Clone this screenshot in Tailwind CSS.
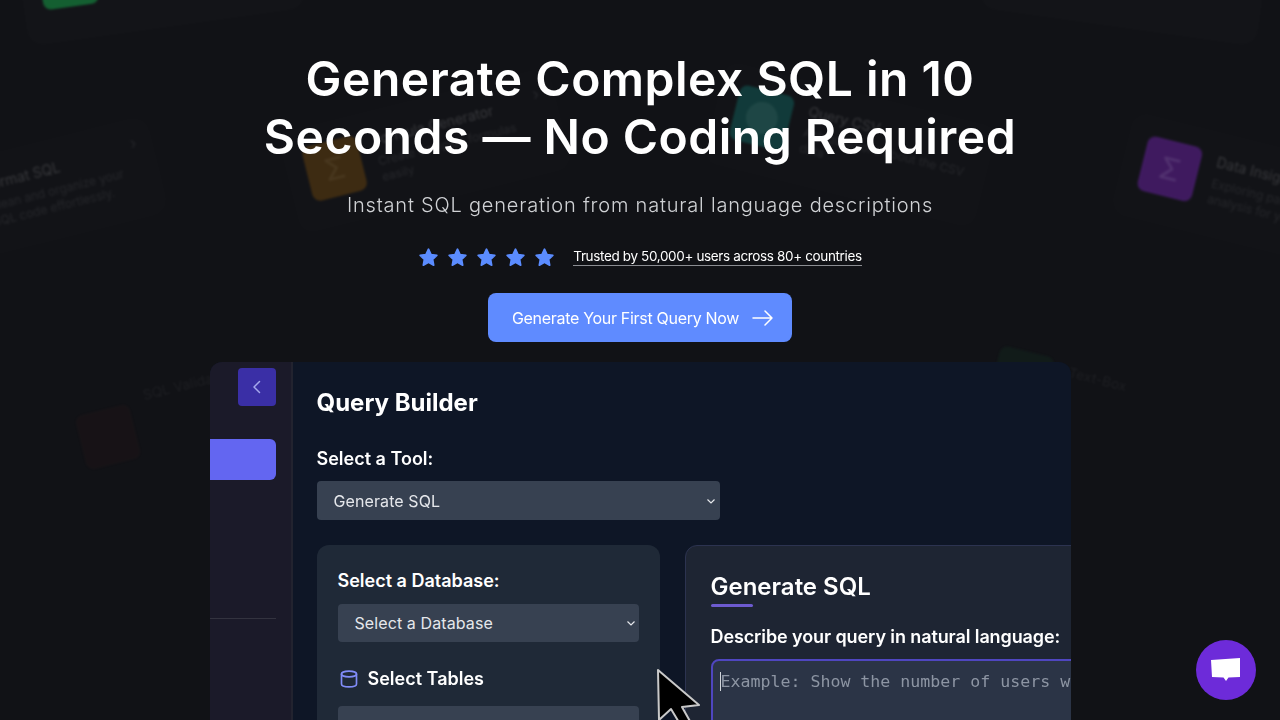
<!DOCTYPE html>
<html lang="en">
<head>
    <meta charset="UTF-8">
    <meta name="viewport" content="width=device-width, initial-scale=1.0">
    <title>Generate Complex SQL</title>
    <script src="https://cdn.jsdelivr.net/npm/@tailwindcss/browser@4"></script>
</head>
<body class="relative h-[720px] overflow-hidden bg-[#111216] font-['Inter',sans-serif]">
    <!-- Faded tool cards behind the hero -->
    <div class="absolute inset-0 blur-[0.8px]">
        <div class="absolute left-[20px] top-[-82px] flex h-[110px] w-[280px] rotate-[-8deg] gap-4 rounded-2xl bg-white/[0.012] p-5">
            <div class="h-[56px] w-[56px] shrink-0 rounded-lg bg-[#15803d]/70"></div>
        </div>
        <div class="absolute left-[985px] top-[-82px] flex h-[110px] w-[280px] rotate-[8deg] gap-4 rounded-2xl bg-white/[0.012] p-5">
            <div class="h-[56px] w-[56px] shrink-0 rounded-lg bg-[#a16207]/5"></div>
        </div>
        <div class="absolute left-[-118px] top-[147px] flex h-[100px] w-[280px] rotate-[-14deg] gap-[30px] rounded-2xl bg-white/[0.006] p-5">
            <div class="h-[56px] w-[56px] shrink-0 rounded-lg bg-[#6b7280]/5"></div>
            <div class="min-w-0 flex-1">
                <p class="text-sm leading-5 text-white/15">Format SQL</p>
                <p class="mt-1 text-xs leading-4 text-white/[0.07]">Clean and organize your SQL code effortlessly.</p>
            </div>
            <span class="absolute right-4 top-3 text-white/[0.07]">&#8250;</span>
        </div>
        <div class="absolute left-[285px] top-[98px] flex h-[105px] w-[280px] rotate-[-14deg] gap-4 rounded-2xl bg-white/[0.008] p-5">
            <div class="flex h-[56px] w-[56px] shrink-0 items-center justify-center rounded-lg bg-[#a16207]/30 text-3xl text-white/[0.06]">&Sigma;</div>
            <div class="min-w-0 flex-1">
                <p class="text-sm leading-5 text-white/15">Formula Generator</p>
                <p class="mt-1 text-xs leading-4 text-white/[0.07]">Create complex formulas easily</p>
            </div>
            <span class="absolute right-4 top-3 text-white/[0.07]">&#8250;</span>
        </div>
        <div class="absolute left-[710px] top-[92px] flex h-[105px] w-[280px] rotate-[14deg] gap-4 rounded-2xl bg-white/[0.008] p-5">
            <div class="flex h-[56px] w-[56px] shrink-0 items-center justify-center rounded-lg bg-[#0f766e]/40">
                <div class="h-8 w-8 rounded-full bg-white/[0.06]"></div>
            </div>
            <div class="min-w-0 flex-1">
                <p class="text-sm leading-5 text-white/15">Query CSV</p>
                <p class="mt-1 text-xs leading-4 text-white/[0.07]">Ask questions about the CSV data</p>
            </div>
        </div>
        <div class="absolute left-[1118px] top-[143px] flex h-[105px] w-[280px] rotate-[14deg] gap-4 rounded-2xl bg-white/[0.008] p-5">
            <div class="flex h-[56px] w-[56px] shrink-0 items-center justify-center rounded-lg bg-[#6b21a8]/50 text-3xl text-white/10">&Sigma;</div>
            <div class="min-w-0 flex-1">
                <p class="text-sm leading-5 text-white/15">Data Insights</p>
                <p class="mt-1 text-xs leading-4 text-white/[0.07]">Exploring patterns and analysis for your data</p>
            </div>
        </div>
        <div class="absolute left-[55px] top-[353px] flex h-[105px] w-[280px] rotate-[-14deg] gap-4 rounded-2xl p-5">
            <div class="mt-[14px] h-[56px] w-[56px] shrink-0 rounded-lg bg-[#7f1d1d]/[0.06]"></div>
            <p class="text-sm leading-5 text-white/[0.05]">SQL Validator</p>
        </div>
        <div class="absolute left-[970px] top-[353px] flex h-[105px] w-[280px] rotate-[14deg] gap-4 rounded-2xl p-5">
            <div class="h-[56px] w-[56px] shrink-0 rounded-lg bg-[#14532d]/15"></div>
            <p class="text-sm leading-5 text-white/[0.05]">Text-Box</p>
        </div>
    </div>

    <!-- Hero -->
    <div class="relative flex flex-col items-center pt-[50px]">
        <h1 class="text-center text-[48px] leading-[58px] font-semibold tracking-[0.5px] text-white">Generate Complex SQL in 10<br>Seconds — No Coding Required</h1>
        <p class="mt-[25px] text-xl leading-7 font-light tracking-[0.8px] text-[#d0d2d5]">Instant SQL generation from natural language descriptions</p>
        <div class="mt-[26px] flex h-6 items-center">
            <div class="flex gap-2">
                <svg class="h-[21px] w-[21px] text-[#5b8cff]" viewBox="0 0 24 24" fill="currentColor" stroke="currentColor" stroke-width="2" stroke-linejoin="round"><path d="M12 2.5l2.900 6.100 6.600.9-4.800 4.600 1.200 6.600-5.900-3.200-5.900 3.200 1.200-6.600-4.800-4.600 6.600-.9z"/></svg>
                <svg class="h-[21px] w-[21px] text-[#5b8cff]" viewBox="0 0 24 24" fill="currentColor" stroke="currentColor" stroke-width="2" stroke-linejoin="round"><path d="M12 2.5l2.900 6.100 6.600.9-4.800 4.600 1.200 6.600-5.900-3.200-5.900 3.200 1.200-6.600-4.800-4.600 6.600-.9z"/></svg>
                <svg class="h-[21px] w-[21px] text-[#5b8cff]" viewBox="0 0 24 24" fill="currentColor" stroke="currentColor" stroke-width="2" stroke-linejoin="round"><path d="M12 2.5l2.900 6.100 6.600.9-4.800 4.600 1.200 6.600-5.900-3.200-5.900 3.200 1.200-6.600-4.800-4.600 6.600-.9z"/></svg>
                <svg class="h-[21px] w-[21px] text-[#5b8cff]" viewBox="0 0 24 24" fill="currentColor" stroke="currentColor" stroke-width="2" stroke-linejoin="round"><path d="M12 2.5l2.900 6.100 6.600.9-4.800 4.600 1.200 6.600-5.900-3.200-5.900 3.200 1.200-6.600-4.800-4.600 6.600-.9z"/></svg>
                <svg class="h-[21px] w-[21px] text-[#5b8cff]" viewBox="0 0 24 24" fill="currentColor" stroke="currentColor" stroke-width="2" stroke-linejoin="round"><path d="M12 2.5l2.900 6.100 6.600.9-4.800 4.600 1.200 6.600-5.900-3.200-5.900 3.200 1.200-6.600-4.800-4.600 6.600-.9z"/></svg>
            </div>
            <span class="ml-[18px] border-b border-[#8b8d92] text-[13.5px] leading-[17px] tracking-[-0.36px] text-white">Trusted by 50,000+ users across 80+ countries</span>
        </div>
        <button class="mt-[24px] flex h-[49px] w-[304px] items-center justify-center gap-[13px] rounded-lg bg-[#5f8bff] pl-[6px] text-base tracking-[-0.3px] text-white">
            Generate Your First Query Now
            <svg class="h-[22px] w-[22px]" viewBox="0 0 22 22" fill="none" stroke="currentColor" stroke-width="1.5" stroke-linecap="round" stroke-linejoin="round"><path d="M1 11h19M13 4l7 7-7 7"/></svg>
        </button>

        <!-- App preview -->
        <div class="mt-[20px] flex h-[400px] w-[861px] overflow-hidden rounded-t-xl bg-[#0e1626]">
            <div class="relative h-full w-[83px] shrink-0 border-r-2 border-[#22232f] bg-[#1b1a29]">
                <div class="absolute left-[28px] top-[6px] flex h-[38px] w-[38px] items-center justify-center rounded bg-[#3a2fa6]">
                    <svg class="h-4 w-4 text-[#a5a8ec]" viewBox="0 0 16 16" fill="none" stroke="currentColor" stroke-width="1.5" stroke-linecap="round" stroke-linejoin="round"><path d="M10.5 2.5L5 8l5.500 5.500"/></svg>
                </div>
                <div class="absolute left-0 top-[77px] h-[41px] w-[66px] rounded-r-md bg-[#6366f1]"></div>
                <div class="absolute left-0 top-[256px] h-px w-[66px] bg-[#33333f]"></div>
            </div>
            <div class="min-w-0 flex-1 px-6">
                <h2 class="mt-[25px] text-2xl leading-8 font-bold text-white">Query Builder</h2>
                <p class="mt-[26px] text-lg leading-7 font-semibold text-white">Select a Tool:</p>
                <div class="mt-[8px] flex h-[39px] w-[403px] items-center justify-between rounded bg-[#374151] pr-[4px] pl-[17px]">
                    <span class="text-base tracking-[0.1px] text-[#e5e7eb]">Generate SQL</span>
                    <svg class="h-[10px] w-[10px] text-[#e5e7eb]" viewBox="0 0 10 10" fill="none" stroke="currentColor" stroke-width="1.2"><path d="M1.500 3.500L5 7l3.500-3.500"/></svg>
                </div>
                <div class="mt-[25px] flex gap-[25px]">
                    <div class="h-[300px] w-[343px] shrink-0 rounded-xl bg-[#1f2937] px-[21px] pt-[22px]">
                        <p class="text-lg leading-7 font-semibold text-white">Select a Database:</p>
                        <div class="mt-[9px] flex h-[38px] items-center justify-between rounded bg-[#374151] pr-[3px] pl-[17px]">
                            <span class="text-base tracking-[0.1px] text-[#e5e7eb]">Select a Database</span>
                            <svg class="h-[10px] w-[10px] text-[#e5e7eb]" viewBox="0 0 10 10" fill="none" stroke="currentColor" stroke-width="1.2"><path d="M1.500 3.500L5 7l3.500-3.500"/></svg>
                        </div>
                        <div class="mt-[23px] flex items-center gap-[9px] pl-[1px]">
                            <svg class="h-[20px] w-[20px] text-[#818cf8]" viewBox="0 0 24 24" fill="none" stroke="currentColor" stroke-width="2" stroke-linecap="round" stroke-linejoin="round"><ellipse cx="12" cy="6" rx="9" ry="3.500"/><path d="M3 6v12c0 2 4 3.500 9 3.500s9-1.500 9-3.500V6"/></svg>
                            <span class="text-lg leading-7 font-semibold text-white">Select Tables</span>
                        </div>
                        <div class="mt-[13px] h-[40px] rounded bg-[#374151]"></div>
                    </div>
                    <div class="h-[300px] w-[420px] shrink-0 rounded-xl border border-[#2c3350] bg-[#1e2533] pt-[25px] pl-[25px]">
                        <h3 class="text-2xl leading-8 font-semibold text-white">Generate SQL</h3>
                        <div class="mt-[1px] h-[3px] w-[42px] rounded-full bg-[#6d5bd0]"></div>
                        <p class="mt-[16px] text-lg leading-7 font-semibold tracking-[-0.1px] text-white">Describe your query in natural language:</p>
                        <div class="mt-[8px] h-[120px] rounded-lg border-2 border-[#4f46c0] bg-[#2b3446] pt-[8px] pl-[7px] whitespace-nowrap">
                            <span class="border-l border-[#d1d5db] font-['DejaVu_Sans_Mono',monospace] text-[16.6px] leading-6 text-[#8d95a3]">Example: Show the number of users who signed up</span>
                        </div>
                    </div>
                </div>
            </div>
        </div>
    </div>

    <!-- Mouse pointer in the recording -->
    <svg class="absolute left-[656px] top-[668px] h-[56px] w-[46px] blur-[0.4px]" viewBox="0 0 46 56">
        <path d="M2 2L43 37L26 39L35 55L24 56L15 41L3 52Z" fill="#000" stroke="#c9c9c9" stroke-width="2" stroke-linejoin="round"/>
    </svg>

    <!-- Chat launcher -->
    <div class="absolute left-[1196px] top-[640px] flex h-[60px] w-[60px] items-center justify-center rounded-full bg-[#6d2bd9]">
        <svg class="h-[30px] w-[30px]" viewBox="0 0 30 30" fill="#fff"><path d="M0 5L29 3V22L17.500 22.500L15 26L12.500 22.500L1 22z"/></svg>
    </div>
</body>
</html>
